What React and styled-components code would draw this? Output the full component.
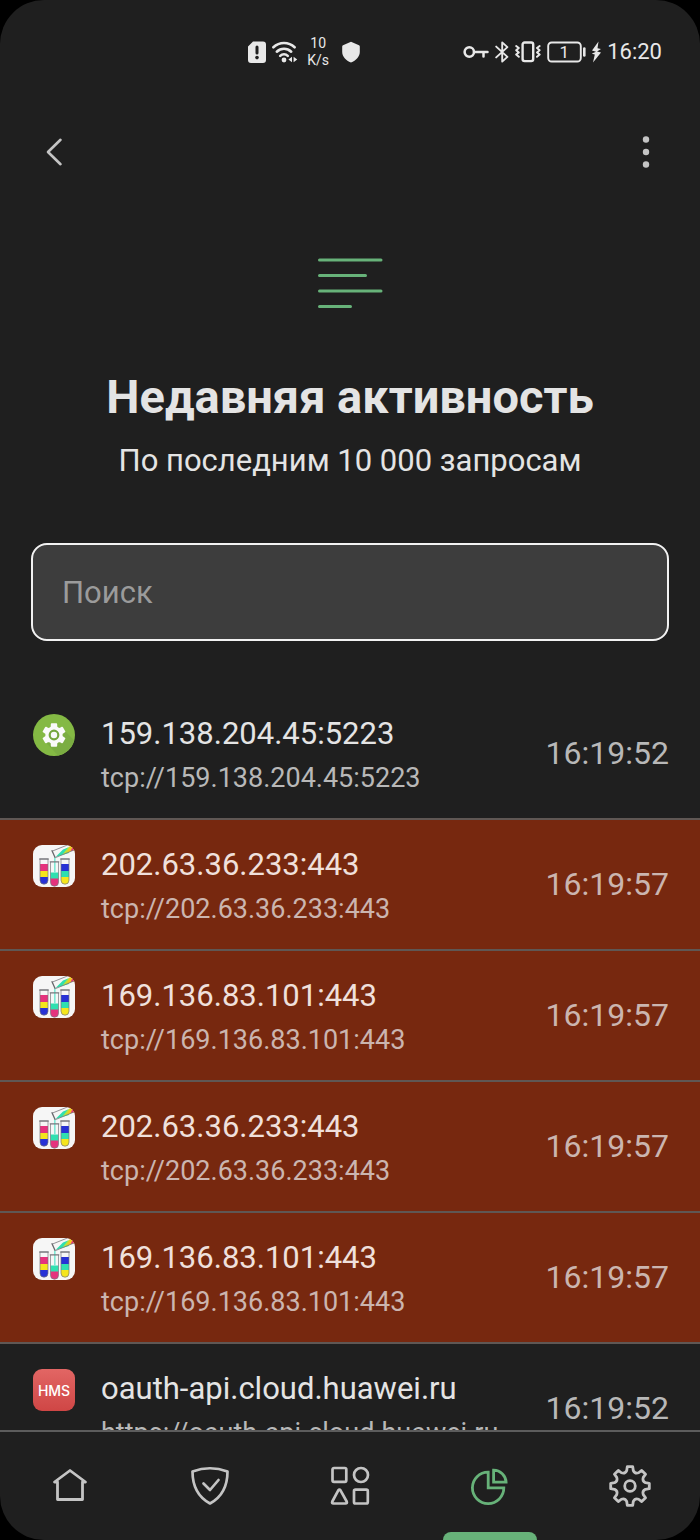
import React from 'react';
import styled, { createGlobalStyle } from 'styled-components';

const GlobalStyle = createGlobalStyle`
  * {
    box-sizing: border-box;
  }

  body {
    margin: 0;
    background: #000000;
    font-family: Roboto, 'Noto Sans', sans-serif;
  }

  button, input {
    font-family: inherit;
  }
`;

const Screen = styled.div`
  height: 100vh;
  display: flex;
  flex-direction: column;
  background: #1f1f1f;
  color: #e4e4e4;
  border-radius: 44px;
  overflow: hidden;
`;

const StatusBar = styled.div`
  flex: none;
  height: 104px;
  display: flex;
  align-items: center;
  justify-content: flex-end;
  gap: 103px;
  padding-right: 38px;
`;

const StatusGroup = styled.div`
  display: flex;
  align-items: center;
  gap: ${props => props.$gap}px;
`;

const NetSpeed = styled.div`
  display: flex;
  flex-direction: column;
  align-items: center;
  width: 24px;
  margin: 0 6px 0 2px;
  font-size: 14px;
  line-height: 17px;
  color: #e8e8e8;
`;

const Clock = styled.span`
  font-size: 22px;
  line-height: 24px;
  color: #e8e8e8;
`;

const Toolbar = styled.header`
  flex: none;
  height: 96px;
  display: flex;
  align-items: center;
  justify-content: space-between;
  padding: 0 30px;
`;

const IconButton = styled.button`
  width: 48px;
  height: 48px;
  display: flex;
  align-items: center;
  justify-content: center;
  padding: 0;
  border: none;
  background: transparent;
  color: #c4c4c4;
  cursor: pointer;
`;

const Hero = styled.section`
  flex: none;
  display: flex;
  flex-direction: column;
  align-items: center;
  padding: 56px 32px 62px;
`;

const Title = styled.h1`
  margin: 57px 0 14px;
  font-size: 47px;
  line-height: 60px;
  font-weight: 700;
  text-align: center;
`;

const Subtitle = styled.p`
  margin: 0;
  font-size: 31px;
  line-height: 40px;
  text-align: center;
`;

const SearchForm = styled.form`
  flex: none;
  padding: 0 31px;
  margin-bottom: 48px;
`;

const SearchInput = styled.input`
  display: block;
  width: 100%;
  height: 98px;
  padding: 0 29px;
  border: 2px solid #f2f2f2;
  border-radius: 16px;
  background: #3d3d3d;
  color: #e4e4e4;
  font-size: 31px;
  outline: none;

  &::placeholder {
    color: #9b9b9b;
    opacity: 1;
  }
`;

const List = styled.ul`
  flex: 1;
  min-height: 0;
  margin: 0;
  padding: 0;
  list-style: none;
  overflow: hidden;
`;

const Row = styled.li`
  height: 131px;
  display: flex;
  align-items: flex-start;
  gap: 26px;
  padding: 25px 31px 0 33px;
  border-bottom: 2px solid #5f5754;
  background: ${props => props.$blocked ? '#77280f' : 'transparent'};
`;

const RowText = styled.div`
  flex: 1;
  min-width: 0;
  display: flex;
  flex-direction: column;
  gap: 4px;
`;

const Host = styled.span`
  font-size: 31px;
  line-height: 40px;
  color: ${props => props.$blocked ? '#f0e0dc' : '#e4e4e4'};
  white-space: nowrap;
`;

const Url = styled.span`
  font-size: 27px;
  line-height: 40px;
  color: ${props => props.$blocked ? '#cbb5af' : '#b8b8b8'};
  white-space: nowrap;
`;

const Time = styled.time`
  align-self: stretch;
  display: flex;
  align-items: center;
  padding-bottom: 26px;
  font-size: 32px;
  color: ${props => props.$blocked ? '#cbb5af' : '#b8b8b8'};
`;

const HmsBadge = styled.div`
  width: 42px;
  height: 42px;
  display: flex;
  align-items: center;
  justify-content: center;
  border-radius: 9px;
  background: linear-gradient(#e26664, #cf4645);
  color: #ffffff;
  font-family: Inter, Roboto, sans-serif;
  font-size: 14px;
  font-weight: 500;
`;

const TabBar = styled.nav`
  flex: none;
  height: 110px;
  display: grid;
  grid-template-columns: repeat(5, 1fr);
  border-top: 2px solid #5c5c5c;
`;

const Tab = styled.a`
  position: relative;
  display: flex;
  align-items: center;
  justify-content: center;
  color: ${props => props.$active ? '#67b279' : '#c4c4c4'};

  &::after {
    content: '';
    display: ${props => props.$active ? 'block' : 'none'};
    position: absolute;
    bottom: 0;
    left: 50%;
    width: 94px;
    height: 8px;
    margin-left: -47px;
    border-radius: 8px 8px 0 0;
    background: #67b279;
  }
`;

function gearPath(cx, cy, teeth, shape) {
  const { outer, base, valley, tip, root } = shape;
  const step = 360 / teeth;
  const at = (r, deg) => {
    const a = ((deg - 90) * Math.PI) / 180;
    return `${(cx + r * Math.cos(a)).toFixed(2)} ${(cy + r * Math.sin(a)).toFixed(2)}`;
  };
  let d = '';
  for (let i = 0; i < teeth; i += 1) {
    const c = i * step;
    d += `${i ? 'L' : 'M'}${at(base, c - root)}L${at(outer, c - tip)}L${at(outer, c + tip)}L${at(base, c + root)}`;
    d += `Q${at(valley, c + step / 2)} ${at(base, c + step - root)}`;
  }
  return `${d}Z`;
}

const NAV_GEAR = gearPath(21, 21, 8, { outer: 19.5, base: 15.8, valley: 13, tip: 8, root: 12 });
const APP_GEAR = gearPath(21, 21, 6, { outer: 11, base: 8.2, valley: 7.2, tip: 12, root: 17 });

const line = { fill: 'none', stroke: 'currentColor', strokeLinecap: 'round', strokeLinejoin: 'round' };

// Status bar icons

const SimAlertIcon = () => (
  <svg width="18" height="22" viewBox="0 0 18 22">
    <path d="M5 .5h10a3 3 0 0 1 3 3V19a3 3 0 0 1-3 3H3a3 3 0 0 1-3-3V5.500z" fill="#e8e8e8" />
    <path d="M9 6v6" stroke="#1f1f1f" strokeWidth="3" strokeLinecap="round" />
    <circle cx="9" cy="16.600" r="1.800" fill="#1f1f1f" />
  </svg>
);

const WifiIcon = () => (
  <svg width="26" height="22" viewBox="0 0 26 22" color="#e8e8e8">
    <g {...line} strokeWidth="2.600">
      <path d="M1.400 6.300a15.400 15.400 0 0 1 21.200 0" />
      <path d="M4.800 10.700a10.400 10.400 0 0 1 14.400 0" />
      <path d="M8.200 14.900a5.600 5.600 0 0 1 7.600 0" />
    </g>
    <circle cx="12" cy="19" r="2.400" fill="#e8e8e8" />
    <path d="M20 15.800v5.400l-3.600-2.700zM21.600 15.800v5.400l3.600-2.700z" fill="#e8e8e8" />
  </svg>
);

const ShieldIcon = () => (
  <svg width="18" height="22" viewBox="0 0 18 22">
    <path d="M9 .8l8 3.400c.5.200.8.600.8 1.200V11c0 4.600-3.800 8.400-8.800 10.600C4 19.400.2 15.600.2 11V5.400c0-.6.300-1 .8-1.200z" fill="#e8e8e8" />
  </svg>
);

const KeyIcon = () => (
  <svg width="26" height="14" viewBox="0 0 26 14" color="#e8e8e8">
    <g {...line} strokeWidth="2.500">
      <circle cx="6.300" cy="7" r="4.700" />
      <path d="M11 7h13.500M20.500 7v4.500" />
    </g>
  </svg>
);

const BluetoothIcon = () => (
  <svg width="14" height="22" viewBox="0 0 14 22" color="#e8e8e8">
    <path d="M1.200 5.600l11.200 10.300L7.200 20.600V1.400l5.200 4.700L1.200 16.400" {...line} strokeWidth="1.900" />
  </svg>
);

const VibrateIcon = () => (
  <svg width="26" height="22" viewBox="0 0 26 22" color="#e8e8e8">
    <rect x="7.600" y="1.500" width="10.600" height="18.600" rx="2" {...line} strokeWidth="2.400" />
    <path
      d="M1.200 5l2.600 2-2.600 2.200 2.600 2.200-2.600 2.200 2.600 2.200M24.600 5L22 7l2.600 2.200-2.600 2.200 2.600 2.200-2.600 2.200"
      {...line}
      strokeWidth="2"
    />
  </svg>
);

const BatteryIcon = () => (
  <svg width="39" height="22" viewBox="0 0 39 22" color="#e8e8e8">
    <rect x="1.200" y="1.500" width="32.600" height="19" rx="3.500" {...line} strokeWidth="1.900" />
    <path d="M37.300 7.500v7" {...line} strokeWidth="2.600" />
    <text x="17.200" y="17" fontSize="17" textAnchor="middle" fill="#e8e8e8">1</text>
  </svg>
);

const BoltIcon = () => (
  <svg width="9" height="22" viewBox="0 0 9 22">
    <path d="M6.500.5L0 9.500l4 1.200-4.400 2 3.200.8L1 21.500l8-10-4-1L9 8 5.500 7.200z" fill="#e8e8e8" />
  </svg>
);

// Toolbar and hero

const BackIcon = () => (
  <svg width="18" height="30" viewBox="0 0 18 30">
    <path d="M15.500 2.800L3 15l12.500 12.200" {...line} strokeWidth="2.600" />
  </svg>
);

const MoreIcon = () => (
  <svg width="8" height="34" viewBox="0 0 8 34" fill="currentColor">
    <circle cx="4" cy="4.500" r="3.200" />
    <circle cx="4" cy="17" r="3.200" />
    <circle cx="4" cy="29.500" r="3.200" />
  </svg>
);

const LinesIcon = () => (
  <svg width="66" height="54" viewBox="0 0 66 54" color="#67b279">
    <path d="M2.500 4h61.500M2.500 19.500h46M2.500 35h61.500M2.500 50.500h31" {...line} strokeWidth="3" />
  </svg>
);

// App icons

const SystemAppIcon = () => (
  <svg width="42" height="42" viewBox="0 0 42 42">
    <circle cx="21" cy="21" r="21" fill="#84b944" />
    <path d="M13 28.500L25 41.600A21 21 0 0 0 41.300 26.500L29.500 14.500z" fill="#7bad42" />
    <path d={APP_GEAR} fill="#fafafa" stroke="#fafafa" strokeWidth="1.800" strokeLinejoin="round" />
    <circle cx="21" cy="21" r="4.300" fill="#fafafa" stroke="#76a63f" strokeWidth="2.200" />
  </svg>
);

const TubesAppIcon = () => (
  <svg width="42" height="42" viewBox="0 0 42 42">
    <defs>
      <clipPath id="tile"><rect width="42" height="42" rx="9" /></clipPath>
      <clipPath id="tubeLeft"><path d="M7 14h8v21.200a4 4 0 0 1-8 0z" /></clipPath>
      <clipPath id="tubeMid"><path d="M17.500 17h8v20.200a4 4 0 0 1-8 0z" /></clipPath>
      <clipPath id="tubeRight"><path d="M28 14h8v21.200a4 4 0 0 1-8 0z" /></clipPath>
    </defs>
    <g clipPath="url(#tile)">
      <rect width="42" height="42" fill="#f6f6f6" />
      <g clipPath="url(#tubeLeft)">
        <path d="M7 19h8v8H7z" fill="#e5327d" />
        <path d="M7 26h8v7H7z" fill="#f5e51d" />
        <path d="M7 32h8v8H7z" fill="#2731d6" />
      </g>
      <g clipPath="url(#tubeMid)">
        <path d="M17 27.500h9V34h-9z" fill="#2fe0b0" />
        <path d="M17 33.500h9V42h-9z" fill="#e5327d" />
      </g>
      <g clipPath="url(#tubeRight)">
        <path d="M28 19h8v8h-8z" fill="#2731d6" />
        <path d="M28 26h8v7h-8z" fill="#2fe0b0" />
        <path d="M28 32h8v8h-8z" fill="#f5e51d" />
      </g>
      <path d="M21.800 28V12.500" stroke="#7fead6" strokeWidth="1.600" />
      <g fill="none" stroke="#77777c" strokeWidth=".7">
        <path d="M7 14v21.200a4 4 0 0 0 8 0V14M17.500 17v20.200a4 4 0 0 0 8 0V17M28 14v21.200a4 4 0 0 0 8 0V14" />
        <path d="M6.300 14h9.400M16.800 16.800h9.400M27.300 14h9.400" strokeWidth="1.300" />
      </g>
      <path d="M22.500 12L30 4.400l5-2L36 8z" fill="#2fe0b0" />
      <path d="M29.500 9.400L35 2.400l3-1.400-1.500 6z" fill="#b8e23a" />
      <path d="M34 7.600L37 1l7-2.500v6z" fill="#f5c81d" />
      <path d="M37.500 6.200L40.500 0H44v4z" fill="#e5327d" />
      <path d="M19.500 6L34 .2M22.500 12.600L42 4.600" stroke="#77777c" strokeWidth=".8" />
      <path d="M18.800 5.200l3.400 7.600" stroke="#66666c" strokeWidth="1.300" />
    </g>
  </svg>
);

const HmsAppIcon = () => <HmsBadge>HMS</HmsBadge>;

// Tab icons

const HomeIcon = () => (
  <svg width="36" height="36" viewBox="0 0 36 36">
    <path d="M18 2.500l15.500 11.500H30.500v17.500h-25V14H2.500z" {...line} strokeWidth="2.800" />
  </svg>
);

const ProtectionIcon = () => (
  <svg width="40" height="40" viewBox="0 0 40 40">
    <g {...line} strokeWidth="2.700">
      <path d="M2.500 5.500C2.500 20 8 31 20 37.500 32 31 37.500 20 37.500 5.500Q20-1 2.500 5.500z" />
      <path d="M13.500 17.500L20 24l8.500-10" />
    </g>
  </svg>
);

const AppsIcon = () => (
  <svg width="40" height="40" viewBox="0 0 40 40">
    <g {...line} strokeWidth="2.700">
      <rect x="2.500" y="2" width="13.800" height="13.800" rx="1.500" />
      <circle cx="31" cy="9" r="7" />
      <path d="M8.300 24.300L2.300 35.500Q1.500 37.500 3.500 37.500h12q2 0 1.200-2L10.500 24.300Q9.400 22.800 8.300 24.300z" />
      <rect x="24" y="23.700" width="13.800" height="13.800" rx="1.500" />
    </g>
  </svg>
);

const StatsIcon = () => (
  <svg width="40" height="40" viewBox="0 0 40 40" fill="none" stroke="currentColor" strokeWidth="2.800">
    <path d="M18.200 6.200v15.600h15.600A15.700 15.700 0 1 1 18.200 6.200z" />
    <path d="M23.600 4.200v12h12.500A12.500 12.500 0 0 0 23.600 4.200z" />
  </svg>
);

const SettingsIcon = () => (
  <svg width="42" height="42" viewBox="0 0 42 42">
    <g {...line} strokeWidth="2.800">
      <path d={NAV_GEAR} />
      <circle cx="21" cy="21" r="5.300" />
    </g>
  </svg>
);

const requests = [
  { icon: SystemAppIcon, host: '159.138.204.45:5223', scheme: 'tcp', time: '16:19:52' },
  { icon: TubesAppIcon, host: '202.63.36.233:443', scheme: 'tcp', time: '16:19:57', blocked: true },
  { icon: TubesAppIcon, host: '169.136.83.101:443', scheme: 'tcp', time: '16:19:57', blocked: true },
  { icon: TubesAppIcon, host: '202.63.36.233:443', scheme: 'tcp', time: '16:19:57', blocked: true },
  { icon: TubesAppIcon, host: '169.136.83.101:443', scheme: 'tcp', time: '16:19:57', blocked: true },
  { icon: HmsAppIcon, host: 'oauth-api.cloud.huawei.ru', scheme: 'https', time: '16:19:52' }
];

const tabs = [
  { id: 'home', label: 'Главная', icon: HomeIcon },
  { id: 'protection', label: 'Защита', icon: ProtectionIcon },
  { id: 'apps', label: 'Приложения', icon: AppsIcon },
  { id: 'stats', label: 'Статистика', icon: StatsIcon },
  { id: 'settings', label: 'Настройки', icon: SettingsIcon }
];

function RequestRow({ request }) {
  const { icon: Icon, host, scheme, time, blocked } = request;

  return (
    <Row $blocked={blocked}>
      <Icon />
      <RowText>
        <Host $blocked={blocked}>{host}</Host>
        <Url $blocked={blocked}>{`${scheme}://${host}`}</Url>
      </RowText>
      <Time $blocked={blocked}>{time}</Time>
    </Row>
  );
}

function App() {
  const [activeTab, setActiveTab] = React.useState('stats');
  const [query, setQuery] = React.useState('');

  const visible = requests.filter(r => r.host.includes(query.trim()));

  return (
    <>
      <GlobalStyle />
      <Screen>
        <StatusBar>
          <StatusGroup $gap={6}>
            <SimAlertIcon />
            <WifiIcon />
            <NetSpeed>
              <span>10</span>
              <span>K/s</span>
            </NetSpeed>
            <ShieldIcon />
          </StatusGroup>
          <StatusGroup $gap={6}>
            <KeyIcon />
            <BluetoothIcon />
            <VibrateIcon />
            <BatteryIcon />
            <BoltIcon />
            <Clock>16:20</Clock>
          </StatusGroup>
        </StatusBar>

        <Toolbar>
          <IconButton type="button" aria-label="Назад"><BackIcon /></IconButton>
          <IconButton type="button" aria-label="Меню"><MoreIcon /></IconButton>
        </Toolbar>

        <Hero>
          <LinesIcon />
          <Title>Недавняя активность</Title>
          <Subtitle>По последним 10 000 запросам</Subtitle>
        </Hero>

        <SearchForm role="search" onSubmit={e => e.preventDefault()}>
          <SearchInput
            type="text"
            aria-label="Поиск"
            placeholder="Поиск"
            value={query}
            onChange={e => setQuery(e.target.value)}
          />
        </SearchForm>

        <List>
          {visible.map((request, i) => (
            <RequestRow key={i} request={request} />
          ))}
        </List>

        <TabBar>
          {tabs.map(({ id, label, icon: Icon }) => (
            <Tab
              key={id}
              href={`#${id}`}
              aria-label={label}
              $active={id === activeTab}
              onClick={() => setActiveTab(id)}
            >
              <Icon />
            </Tab>
          ))}
        </TabBar>
      </Screen>
    </>
  );
}

export default App;
